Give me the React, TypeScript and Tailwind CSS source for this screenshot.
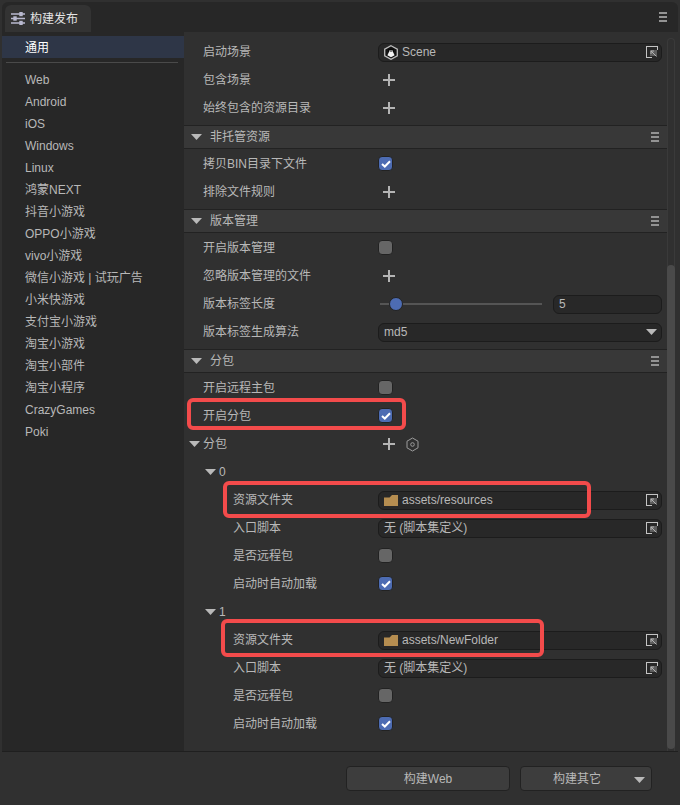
import React from 'react';

const Caret = ({ className = '' }: { className?: string }) => (
  <svg width="11" height="6" viewBox="0 0 11 6" className={className}>
    <path d="M0 0H11L5.5 6Z" fill="#b9b9b9" />
  </svg>
);

const MenuIcon = () => (
  <svg width="8" height="10" viewBox="0 0 8 10" shapeRendering="crispEdges">
    <path d="M0 0H8V2H0ZM0 4H8V6H0ZM0 8H8V10H0Z" fill="#939393" />
  </svg>
);

const Plus = () => (
  <svg width="12" height="12" viewBox="0 0 12 12" shapeRendering="crispEdges">
    <path d="M5 0H7V5H12V7H7V12H5V7H0V5H5Z" fill="#b4b4b4" />
  </svg>
);

const AddButton = () => (
  <div className="-mt-px pl-[5px]">
    <Plus />
  </div>
);

const HexGear = () => (
  <svg width="13" height="15" viewBox="0 0 13 15" fill="none" stroke="#9c9c9c">
    <path d="M6.5 1L12 4.2V10.8L6.5 14L1 10.8V4.2Z" />
    <circle cx="6.5" cy="7.5" r="1.8" />
  </svg>
);

const PickIcon = () => (
  <svg width="12" height="12" viewBox="0 0 12 12" fill="none">
    <path d="M11.5 4V.5H.5V11.5H6" stroke="#c4c4c4" shapeRendering="crispEdges" />
    <rect x="4" y="4" width="7" height="6" fill="#5e5e5e" />
    <path d="M5 5L10.5 10.5M5 5H8M5 5V8" stroke="#b4b4b4" />
  </svg>
);

const Folder = () => (
  <svg width="14" height="11" viewBox="0 0 14 11">
    <path d="M0 2.5H5.5L8 0H14V11H0Z" fill="#b58d50" />
  </svg>
);

const SceneIcon = () => (
  <svg width="14" height="15" viewBox="0 0 14 15">
    <path d="M7 .7L13.3 4.2V10.8L7 14.3L.7 10.8V4.2Z" fill="#141414" stroke="#bdbdbd" strokeWidth="1.3" />
    <path d="M4.5 3.8H9.5L10 7H4Z" fill="#050505" />
    <path d="M5.2 5.5H8.8L9 7L10.6 10.2L7 12.2L3.4 10.2L5 7Z" fill="#f4f4f4" />
    <path d="M5.8 6H6.5V7H5.8ZM7.5 6H8.2V7H7.5Z" fill="#111" />
  </svg>
);

const Check = ({ on = false }: { on?: boolean }) =>
  on ? (
    <div className="-mt-px flex h-[15px] w-[15px] items-center justify-center rounded-[4px] border border-[#222] bg-[#4d6cb3]">
      <svg width="10" height="8" viewBox="0 0 10 8" fill="none">
        <path d="M1 4L3.8 6.5L9 1.2" stroke="#fff" strokeWidth="2" />
      </svg>
    </div>
  ) : (
    <div className="-mt-px h-[15px] w-[15px] rounded-[4px] border border-[#222] bg-[#666]" />
  );

const Field = ({ icon, text, pick = false }: { icon?: React.ReactNode; text: string; pick?: boolean }) => (
  <div className="flex h-[19px] w-[284px] items-center gap-[4px] rounded-[6px] border border-[#1c1c1c] bg-[#282828] pl-[5px] pr-[3px]">
    {icon}
    <span className="flex-1">{text}</span>
    {pick && <PickIcon />}
  </div>
);

const Row = ({
  label,
  indent = 19,
  children,
  mark,
}: {
  label: string;
  indent?: number;
  children?: React.ReactNode;
  mark?: string;
}) => (
  <div className="relative flex h-[28px] items-center">
    <div className="shrink-0" style={{ width: 194, paddingLeft: indent }}>
      {label}
    </div>
    {children}
    {mark && <div className={`pointer-events-none absolute rounded-[6px] border-[4px] border-[#f34b4b] ${mark}`} />}
  </div>
);

const Section = ({ title, children }: { title: string; children: React.ReactNode }) => (
  <div>
    <div className="flex h-[24px] items-center border-y border-y-[#222] bg-[#383838] pl-[7px] pr-[8px]">
      <Caret />
      <span className="ml-[8px] flex-1">{title}</span>
      <MenuIcon />
    </div>
    <div className="pb-[3px] pt-[1px]">{children}</div>
  </div>
);

const Plat = [
  'Web',
  'Android',
  'iOS',
  'Windows',
  'Linux',
  '鸿蒙NEXT',
  '抖音小游戏',
  'OPPO小游戏',
  'vivo小游戏',
  '微信小游戏 | 试玩广告',
  '小米快游戏',
  '支付宝小游戏',
  '淘宝小游戏',
  '淘宝小部件',
  '淘宝小程序',
  'CrazyGames',
  'Poki',
];

const SubPackage = ({ name, path, mark }: { name: string; path: string; mark: string }) => (
  <div>
    <div className="flex h-[28px] items-center pl-[21px]">
      <Caret />
      <span className="ml-[3px]">{name}</span>
    </div>
    <Row label="资源文件夹" indent={49} mark={mark}>
      <Field icon={<Folder />} text={path} pick />
    </Row>
    <Row label="入口脚本" indent={49}>
      <Field text="无 (脚本集定义)" pick />
    </Row>
    <Row label="是否远程包" indent={49}>
      <Check />
    </Row>
    <Row label="启动时自动加载" indent={49}>
      <Check on />
    </Row>
  </div>
);

export default function App() {
  return (
    <div
      className="flex h-[805px] w-[680px] flex-col overflow-hidden bg-[#303030] px-[2px] pt-[2px] text-[12px] text-[#b8b8b8]"
      style={{ fontFamily: '"Liberation Sans", "Noto Sans CJK SC", sans-serif' }}
    >
      {/* Tab bar */}
      <div className="flex h-[30px] shrink-0 items-end rounded-t-[6px] bg-[#272727] pl-[3px] pr-[11px]">
        <div className="flex h-[27px] w-[86px] items-center gap-[5px] rounded-t-[6px] bg-[#333] pl-[6px] text-[#e4e4e4]">
          <svg width="14" height="13" viewBox="0 0 14 13" fill="none" stroke="#b9b9cf" strokeWidth="1.4">
            <path d="M0 2H14M0 6.5H14M0 11H14" />
            <rect x="9" y=".5" width="2" height="3" fill="#b9b9cf" />
            <rect x="3" y="5" width="2" height="3" fill="#b9b9cf" />
            <rect x="9" y="9.5" width="2" height="3" fill="#b9b9cf" />
          </svg>
          构建发布
        </div>
        <div className="flex-1" />
        <div className="mb-[10px]">
          <MenuIcon />
        </div>
      </div>

      {/* Body */}
      <div className="flex min-h-0 flex-1 border-b border-b-[#1f1f1f]">
        <div className="w-[182px] shrink-0 bg-[#272727] pt-[4px]">
          <div className="flex h-[22px] items-center bg-[#2e3647] pl-[23px] pt-px text-white">通用</div>
          <div className="mb-[6px] ml-[4px] mt-[4px] h-px w-[172px] bg-[#4a4a4a]" />
          {Plat.map((p) => (
            <div key={p} className="flex h-[22px] items-center pl-[23px]">
              {p}
            </div>
          ))}
        </div>

        <div className="min-w-0 flex-1 pt-[6px]">
          <div className="pb-[3px]">
            <Row label="启动场景">
              <Field icon={<SceneIcon />} text="Scene" pick />
            </Row>
            <Row label="包含场景">
              <AddButton />
            </Row>
            <Row label="始终包含的资源目录">
              <AddButton />
            </Row>
          </div>

          <Section title="非托管资源">
            <Row label="拷贝BIN目录下文件">
              <Check on />
            </Row>
            <Row label="排除文件规则">
              <AddButton />
            </Row>
          </Section>

          <Section title="版本管理">
            <Row label="开启版本管理">
              <Check />
            </Row>
            <Row label="忽略版本管理的文件">
              <AddButton />
            </Row>
            <Row label="版本标签长度">
              <div className="relative flex h-[14px] w-[164px] items-center pl-[2px]">
                <div className="h-[2px] w-[162px] bg-[#555]" />
                <div className="absolute left-[11px] top-0 h-[14px] w-[14px] rounded-full border border-[#222] bg-[#4d6cb3]" />
              </div>
              <div className="ml-[11px] flex h-[19px] w-[109px] items-center rounded-[6px] border border-[#1c1c1c] bg-[#282828] pl-[5px]">
                5
              </div>
            </Row>
            <Row label="版本标签生成算法">
              <div className="flex h-[19px] w-[284px] items-center justify-between rounded-[6px] border border-[#1c1c1c] bg-[#282828] pl-[5px] pr-[4px]">
                md5
                <Caret />
              </div>
            </Row>
          </Section>

          <Section title="分包">
            <Row label="开启远程主包">
              <Check />
            </Row>
            <Row label="开启分包" mark="left-[3px] top-[-4px] h-[32px] w-[219px]">
              <Check on />
            </Row>
            <div className="flex h-[28px] items-center pl-[5px]">
              <Caret />
              <span className="ml-[3px] w-[175px]">分包</span>
              <div className="flex items-center gap-[11px]">
                <AddButton />
                <HexGear />
              </div>
            </div>
            <SubPackage name="0" path="assets/resources" mark="left-[39px] top-[-5px] h-[37px] w-[368px]" />
            <SubPackage name="1" path="assets/NewFolder" mark="left-[37px] top-[-7px] h-[38px] w-[323px]" />
          </Section>
        </div>

        {/* Scrollbar */}
        <div className="mr-[3px] mt-[6px] w-[8px] shrink-0 rounded-t-[4px] border border-b-0 border-[#3a3a3a] pt-[226px]">
          <div className="-ml-px h-[484px] w-[8px] rounded-[4px] bg-[#4a4a4a]" />
        </div>
      </div>

      {/* Footer */}
      <div className="flex h-[53px] shrink-0 items-start justify-end gap-[10px] pr-[26px] pt-[14px]">
        <div className="flex h-[25px] w-[164px] items-center justify-center rounded-[4px] border border-[#222] bg-[#3d3d3d]">
          构建Web
        </div>
        <div className="relative flex h-[25px] w-[132px] items-center rounded-[4px] border border-[#222] bg-[#3d3d3d] pl-[32px]">
          构建其它
          <div className="absolute right-[6px] top-[10px]">
            <Caret />
          </div>
        </div>
      </div>
    </div>
  );
}
